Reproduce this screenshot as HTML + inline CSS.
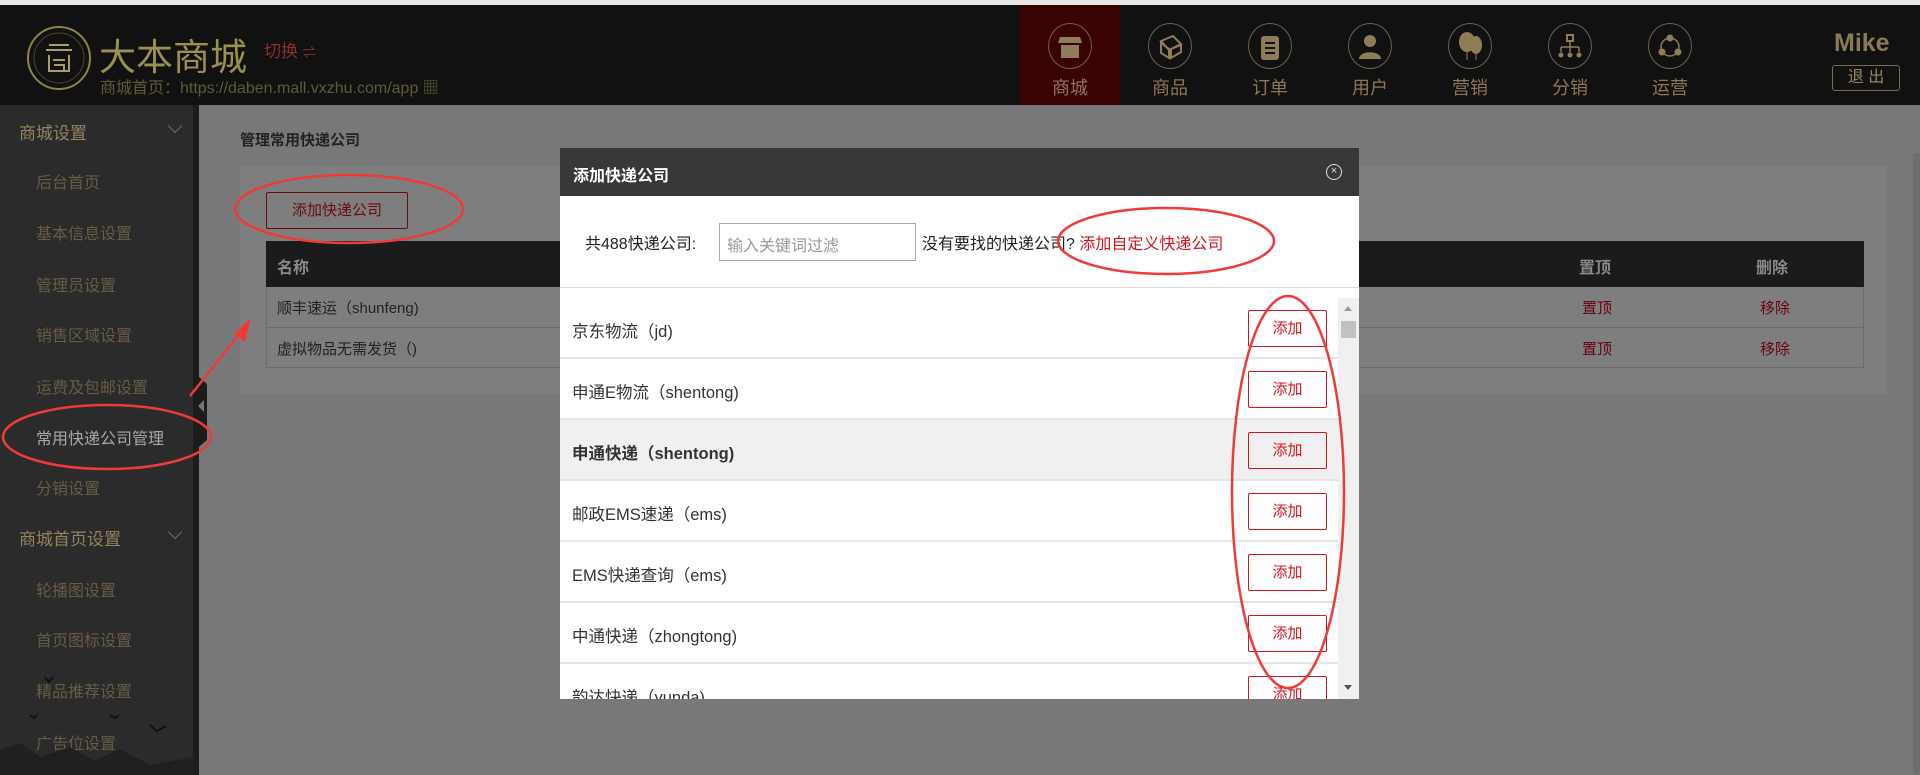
<!DOCTYPE html>
<html><head><meta charset="utf-8"><style>
*{margin:0;padding:0;box-sizing:border-box}
body{width:1920px;height:775px;overflow:hidden;background:#78787a;font-family:"Liberation Sans","Noto Sans CJK SC",sans-serif;position:relative}
.abs{position:absolute}
#top{left:0;top:0;width:1920px;height:5px;background:#e8e8e8}
#hd{left:0;top:5px;width:1920px;height:100px;background:#111}
.nav{position:absolute;top:0;width:100px;height:100px;text-align:center;color:#8f7658;font-size:18px}
.nav .c{position:absolute;left:28px;top:18px;width:44px;height:46px;border:1px solid #6f6048;border-radius:50%}
.nav .l{position:absolute;left:0;width:100px;top:69px}
#sb{left:0;top:105px;width:193px;height:670px;background:#2b2b2b}
#sbs{left:193px;top:105px;width:6px;height:670px;background:#1c1c1c}
.g{position:absolute;left:19px;color:#948260;font-size:17px}
.it{position:absolute;left:36px;color:#675c44;font-size:16px}
.sep{position:absolute;left:36px;width:120px;height:1px;background:#2f2f2f}
.chev{position:absolute;left:170px;width:10px;height:10px;border-right:1.5px solid #7a6c52;border-bottom:1.5px solid #7a6c52;transform:rotate(45deg)}
#panel{left:240px;top:166px;width:1647px;height:228px;background:#7e7e7e}
.row{position:absolute;left:560px;width:778px;height:61px;border-bottom:2px solid #e6e6e6;background:#fff;font-size:16.5px;color:#333}
.row span{position:absolute;left:12px;top:20px}
.row b.btn{position:absolute;left:688px;top:12px;width:79px;height:37px;border:1px solid #d2141e;border-radius:2px;color:#d2141e;font-weight:normal;font-size:15px;text-align:center;line-height:35px}
</style></head><body>
<div class="abs" id="top"></div>
<div class="abs" id="hd">
 <svg class="abs" style="left:20px;top:14px" width="78" height="78" viewBox="0 0 78 78">
  <circle cx="39" cy="39" r="31" fill="none" stroke="#8f8448" stroke-width="2"/>
  <circle cx="39" cy="39" r="25" fill="none" stroke="#4a4630" stroke-width="1"/>
  <path d="M29 26h20M26 31h26M29 36v16h20V36M33 41h12M34 46h10v6" fill="none" stroke="#a89e62" stroke-width="2"/>
 </svg>
 <div class="abs" style="left:99px;top:22px;font-size:37px;color:#9a9150">大本商城</div>
 <div class="abs" style="left:264px;top:32px;font-size:17px;color:#8b2e2e">切换 <span style="font-size:13px">⇌</span></div>
 <div class="abs" style="left:100px;top:69px;font-size:16px;color:#5e5a3a">商城首页：https://daben.mall.vxzhu.com/app ▦</div>
 <div class="abs" style="left:1020px;top:0;width:100px;height:100px;background:#3a0303"></div>
 <div class="nav" style="left:1020px"><div class="c"></div><svg class="abs" style="left:36px;top:28px" width="28" height="28"><path d="M4 4h20l2 6H2z" fill="#8f7c58"/><path d="M5 12h18v13H5z" fill="#8f7c58"/></svg><div class="l">商城</div></div>
 <div class="nav" style="left:1120px"><div class="c"></div><svg class="abs" style="left:35px;top:28px" width="30" height="28"><path d="M6 8l12-5 8 8-12 6z M6 10v10l8 5V16z M16 16v9l10-6v-7z" fill="none" stroke="#8f7c58" stroke-width="2"/></svg><div class="l">商品</div></div>
 <div class="nav" style="left:1220px"><div class="c"></div><svg class="abs" style="left:38px;top:27px" width="24" height="30"><rect x="3" y="4" width="18" height="24" rx="3" fill="#8f7c58"/><path d="M7 11h10M7 16h10M7 21h10" stroke="#111" stroke-width="2"/></svg><div class="l">订单</div></div>
 <div class="nav" style="left:1320px"><div class="c"></div><svg class="abs" style="left:36px;top:27px" width="28" height="30"><circle cx="14" cy="9" r="6" fill="#8f7c58"/><path d="M3 27c0-9 22-9 22 0z" fill="#8f7c58"/></svg><div class="l">用户</div></div>
 <div class="nav" style="left:1420px"><div class="c"></div><svg class="abs" style="left:36px;top:25px" width="28" height="32"><ellipse cx="11" cy="12" rx="8" ry="10" fill="#8f7c58"/><ellipse cx="20" cy="15" rx="6" ry="9" fill="#8f7c58"/><path d="M11 22v8M20 24v6" stroke="#8f7c58"/></svg><div class="l">营销</div></div>
 <div class="nav" style="left:1520px"><div class="c"></div><svg class="abs" style="left:36px;top:27px" width="28" height="30"><rect x="11" y="3" width="6" height="6" fill="none" stroke="#8f7c58" stroke-width="2"/><path d="M14 9v6M5 15h18M5 15v5M14 15v5M23 15v5" stroke="#8f7c58" stroke-width="1.5" fill="none"/><circle cx="5" cy="23" r="2.5" fill="#8f7c58"/><circle cx="14" cy="23" r="2.5" fill="#8f7c58"/><circle cx="23" cy="23" r="2.5" fill="#8f7c58"/></svg><div class="l">分销</div></div>
 <div class="nav" style="left:1620px"><div class="c"></div><svg class="abs" style="left:36px;top:27px" width="28" height="30"><circle cx="14" cy="15" r="9" fill="none" stroke="#8f7c58" stroke-width="1.5"/><circle cx="14" cy="6" r="3.5" fill="#8f7c58"/><circle cx="6" cy="20" r="3.5" fill="#8f7c58"/><circle cx="22" cy="20" r="3.5" fill="#8f7c58"/></svg><div class="l">运营</div></div>
 <div class="abs" style="left:1834px;top:24px;font-size:25px;font-weight:bold;color:#8a7a5a">Mike</div>
 <div class="abs" style="left:1832px;top:60px;width:68px;height:26px;border:1px solid #7a6a4e;border-radius:3px;color:#9a8660;font-size:16px;text-align:center;line-height:24px">退 出</div>
</div>
<div class="abs" id="sb">
 <div class="g" style="top:14px">商城设置</div><div class="chev" style="top:16px"></div>
 <div class="it" style="top:64px">后台首页</div><div class="sep" style="top:100px"></div>
 <div class="it" style="top:115px">基本信息设置</div><div class="sep" style="top:151px"></div>
 <div class="it" style="top:167px">管理员设置</div><div class="sep" style="top:202px"></div>
 <div class="it" style="top:217px">销售区域设置</div><div class="sep" style="top:253px"></div>
 <div class="it" style="top:269px">运费及包邮设置</div><div class="sep" style="top:304px"></div>
 <div class="it" style="top:320px;color:#a8a8a8">常用快递公司管理</div>
 <div class="it" style="top:370px">分销设置</div>
 <div class="g" style="top:420px">商城首页设置</div><div class="chev" style="top:422px"></div>
 <div class="it" style="top:472px">轮播图设置</div><div class="sep" style="top:508px"></div>
 <div class="it" style="top:522px">首页图标设置</div><div class="sep" style="top:558px"></div>
 <div class="it" style="top:573px">精品推荐设置</div>
 <div class="it" style="top:625px">广告位设置</div>
 <svg class="abs" style="left:0;top:560px" width="193" height="110"><path d="M0 110L0 85 20 78 40 92 70 82 95 96 120 84 150 100 193 92V110z" fill="#202020"/><path d="M45 12l4 5 4-5M150 60l7 6 9-5M110 50l5 3 4-3M30 50l4 3 3-3" stroke="#111" stroke-width="2" fill="none"/></svg>
</div>
<div class="abs" id="sbs"></div>
<div class="abs" style="left:193px;top:372px;width:14px;height:80px;background:#1c1c1c;clip-path:polygon(0 0,100% 15%,100% 85%,0 100%)"></div>
<div class="abs" style="left:198px;top:400px;width:0;height:0;border-right:6px solid #777;border-top:6px solid transparent;border-bottom:6px solid transparent"></div>
<div class="abs" style="left:240px;top:129px;font-size:15px;font-weight:bold;color:#222">管理常用快递公司</div>
<div class="abs" id="panel"></div>
<div class="abs" style="left:266px;top:192px;width:142px;height:37px;border:1px solid #6a0a0a;border-radius:2px;color:#6a0a0a;font-size:15px;text-align:center;line-height:35px">添加快递公司</div>
<div class="abs" style="left:266px;top:241px;width:1598px;height:46px;background:#1b1b1d"></div>
<div class="abs" style="left:277px;top:254px;font-size:16px;font-weight:bold;color:#8a8a8a">名称</div>
<div class="abs" style="left:1579px;top:254px;font-size:16px;font-weight:bold;color:#8a8a8a">置顶</div>
<div class="abs" style="left:1756px;top:254px;font-size:16px;font-weight:bold;color:#8a8a8a">删除</div>
<div class="abs" style="left:266px;top:287px;width:1598px;height:81px;border:1px solid #6c6c6c;border-top:none"></div>
<div class="abs" style="left:266px;top:327px;width:1598px;height:1px;background:#6c6c6c"></div>
<div class="abs" style="left:277px;top:297px;font-size:15px;color:#222">顺丰速运（shunfeng)</div>
<div class="abs" style="left:277px;top:338px;font-size:15px;color:#222">虚拟物品无需发货（)</div>
<div class="abs" style="left:1582px;top:297px;font-size:15px;color:#6a0010">置顶</div>
<div class="abs" style="left:1582px;top:338px;font-size:15px;color:#6a0010">置顶</div>
<div class="abs" style="left:1760px;top:297px;font-size:15px;color:#6a0010">移除</div>
<div class="abs" style="left:1760px;top:338px;font-size:15px;color:#6a0010">移除</div>
<div class="abs" style="left:1913px;top:153px;width:7px;height:622px;background:#6e6e6e;border-radius:3px"></div>
<!-- modal -->
<div class="abs" style="left:560px;top:148px;width:799px;height:551px;background:#fff;overflow:hidden">
 <div class="abs" style="left:0;top:0;width:799px;height:48px;background:#383838"></div>
 <div class="abs" style="left:13px;top:14px;color:#fff;font-weight:bold;font-size:16px">添加快递公司</div>
 <div class="abs" style="left:766px;top:16px;width:16px;height:16px;border:1.5px solid #ddd;border-radius:50%;color:#ddd;font-size:11px;line-height:13px;text-align:center">×</div>
 <div class="abs" style="left:25px;top:82px;font-size:16px;color:#222">共488快递公司:</div>
 <div class="abs" style="left:159px;top:75px;width:197px;height:38px;border:1px solid #aaa"></div>
 <div class="abs" style="left:167px;top:84px;font-size:16px;color:#999">输入关键词过滤</div>
 <div class="abs" style="left:362px;top:82px;font-size:16px;color:#222">没有要找的快递公司? <span style="color:#d2141e">添加自定义快递公司</span></div>
 <div class="abs" style="left:0;top:139px;width:799px;height:1px;background:#ddd"></div>
 <div class="abs" style="left:778px;top:150px;width:21px;height:401px;background:#f0f0f0"></div>
 <div class="abs" style="left:781px;top:173px;width:15px;height:17px;background:#c1c1c1"></div>
 <div class="abs" style="left:784px;top:158px;border-bottom:5px solid #999;border-left:4px solid transparent;border-right:4px solid transparent"></div>
 <div class="abs" style="left:784px;top:537px;border-top:5px solid #555;border-left:4px solid transparent;border-right:4px solid transparent"></div>
</div>
<div class="row" style="top:298px"><span>京东物流（jd)</span><b class="btn">添加</b></div>
<div class="row" style="top:359px"><span>申通E物流（shentong)</span><b class="btn">添加</b></div>
<div class="row" style="top:420px;background:#f0f0f0"><span style="font-weight:bold">申通快递（shentong)</span><b class="btn">添加</b></div>
<div class="row" style="top:481px"><span>邮政EMS速递（ems)</span><b class="btn">添加</b></div>
<div class="row" style="top:542px"><span>EMS快递查询（ems)</span><b class="btn">添加</b></div>
<div class="row" style="top:603px"><span>中通快递（zhongtong)</span><b class="btn">添加</b></div>
<div class="row" style="top:664px;height:35px;overflow:hidden;border:none"><span>韵达快递（yunda)</span><b class="btn">添加</b></div>
<svg class="abs" style="left:0;top:0" width="1920" height="775">
 <g fill="none" stroke="#f03a3a" stroke-width="2.5">
  <ellipse cx="349" cy="209" rx="114" ry="34"/>
  <ellipse cx="107" cy="437" rx="104" ry="32"/>
  <ellipse cx="1166" cy="241" rx="108" ry="33"/>
  <ellipse cx="1288" cy="492" rx="56" ry="196"/>
  <path d="M190 396L245 327"/>
 </g>
 <path d="M251 318l-17 16 11 8z" fill="#f03a3a"/>
</svg>
</body></html>
